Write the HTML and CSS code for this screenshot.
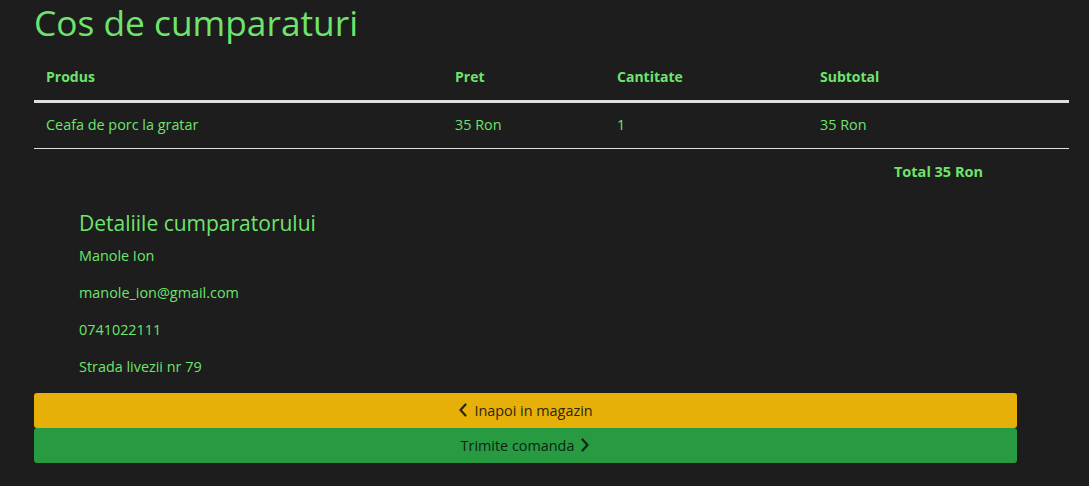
FILE: index.html
```html
<!DOCTYPE html>
<html lang="ro">
<head>
<meta charset="utf-8">
<title>Cos de cumparaturi</title>
<link rel="stylesheet" href="styles.css">
</head>
<body>
<main class="page">
  <h1 class="title">Cos de cumparaturi</h1>
  <table class="cart">
    <colgroup>
      <col class="c-prod"><col class="c-pret"><col class="c-cant"><col class="c-sub">
    </colgroup>
    <thead>
      <tr><th>Produs</th><th>Pret</th><th>Cantitate</th><th>Subtotal</th></tr>
    </thead>
    <tbody>
      <tr><td>Ceafa de porc la gratar</td><td>35 Ron</td><td>1</td><td>35 Ron</td></tr>
    </tbody>
  </table>
  <div class="total">Total 35 Ron</div>
  <section class="details">
    <h4 class="details-title">Detaliile cumparatorului</h4>
    <p>Manole Ion</p>
    <p>manole_ion@gmail.com</p>
    <p>0741022111</p>
    <p>Strada livezii nr 79</p>
  </section>
  <div class="actions">
    <button class="btn btn-back" type="button">
      <svg class="chev" viewBox="0 0 10 14" width="10" height="14" aria-hidden="true"><polyline points="7.5,1.5 2.5,7 7.5,12.5" fill="none" stroke="currentColor" stroke-width="2.2" stroke-linecap="round" stroke-linejoin="round"/></svg>
      <span>Inapoi in magazin</span>
    </button>
    <button class="btn btn-send" type="button">
      <span>Trimite comanda</span>
      <svg class="chev" viewBox="0 0 10 14" width="10" height="14" aria-hidden="true"><polyline points="2.5,1.5 7.5,7 2.5,12.5" fill="none" stroke="currentColor" stroke-width="2.2" stroke-linecap="round" stroke-linejoin="round"/></svg>
    </button>
  </div>
</main>
</body>
</html>
```
FILE: styles.css
```css
* { box-sizing: border-box; }
html, body { margin: 0; padding: 0; }
body {
  background: #1c1d1c;
  color: #6ee46c;
  font-family: "Open Sans", "Noto Sans", sans-serif;
  font-size: 14.4px;
  line-height: 22.5px;
}
.page {
  padding: 0 20px 0 34px;
}
.title {
  margin: 0 0 8.5px;
  font-size: 35.3px;
  font-weight: 400;
  line-height: 45px;
}
.cart {
  width: 1035px;
  border-collapse: collapse;
}
.c-prod { width: 409px; }
.c-pret { width: 162px; }
.c-cant { width: 203px; }
.c-sub { width: 261px; }
.cart th, .cart td {
  text-align: left;
  padding: 11.25px 12px;
  vertical-align: top;
}
.cart th {
  font-size: 14px;
  font-weight: 700;
  border-top: 1px solid #1c1d1c;
  border-bottom: 3px solid #dedede;
}
.cart td {
  border-bottom: 1px solid #dedede;
}
.total {
  font-size: 14.5px;
  font-weight: 700;
  text-align: right;
  padding-right: 86px;
  margin-top: 12px;
}
.details {
  margin: 27px 0 0 45px;
}
.details-title {
  margin: 0 0 7.5px;
  font-size: 21px;
  font-weight: 400;
  line-height: 27px;
}
.details p {
  margin: 0 0 14.5px;
}
.actions {
  width: 983px;
  display: flex;
  flex-direction: column;
}
.btn {
  display: flex;
  align-items: center;
  justify-content: center;
  gap: 6px;
  height: 35px;
  width: 100%;
  border: none;
  border-radius: 3px;
  font-family: inherit;
  font-size: 14.4px;
  padding: 0 12px;
}
.btn-back { background: #e6b008; color: #2e2508; }
.btn-send { background: #289a42; color: #0f2413; }
.chev { display: block; }
```
